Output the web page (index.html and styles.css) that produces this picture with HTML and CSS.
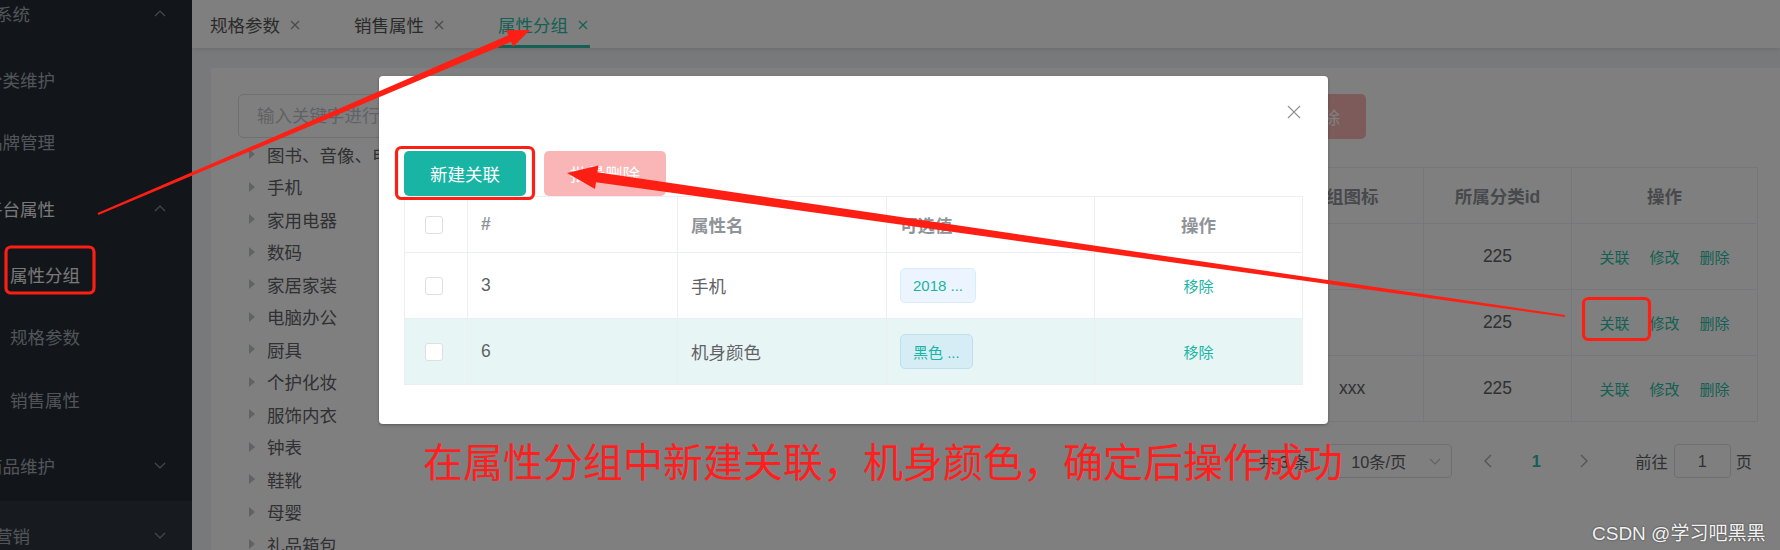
FILE: index.html
```html
<!DOCTYPE html>
<html lang="zh-CN">
<head>
    <meta charset="UTF-8">
    <title>属性分组</title>
    <link rel="stylesheet" href="styles.css">
</head>
<body>
    <div class="app">
        <aside class="sidebar">
            <ul class="menu">
                <li class="menu-title lv1"><span class="label">商品系统</span><svg class="chevron" viewBox="0 0 12 7"><path d="M1 6 L6 1 L11 6"/></svg></li>
                <li class="menu-item lv2"><span class="label">分类维护</span></li>
                <li class="menu-item lv2"><span class="label">品牌管理</span></li>
                <li class="menu-title lv2 open"><span class="label">平台属性</span><svg class="chevron" viewBox="0 0 12 7"><path d="M1 6 L6 1 L11 6"/></svg></li>
                <li class="menu-item lv3 active"><span class="label">属性分组</span></li>
                <li class="menu-item lv3"><span class="label">规格参数</span></li>
                <li class="menu-item lv3"><span class="label">销售属性</span></li>
                <li class="menu-title lv2"><span class="label">商品维护</span><svg class="chevron" viewBox="0 0 12 7"><path d="M1 1 L6 6 L11 1"/></svg></li>
                <li class="menu-title lv1 hover"><span class="label">优惠营销</span><svg class="chevron" viewBox="0 0 12 7"><path d="M1 1 L6 6 L11 1"/></svg></li>
            </ul>
        </aside>

        <div class="main">
            <div class="tabs">
                <div class="tab"><span class="tab-inner">规格参数<svg class="tab-close" viewBox="0 0 14 14"><path d="M3 3 L11 11 M11 3 L3 11"/></svg></span></div>
                <div class="tab"><span class="tab-inner">销售属性<svg class="tab-close" viewBox="0 0 14 14"><path d="M3 3 L11 11 M11 3 L3 11"/></svg></span></div>
                <div class="tab active"><span class="tab-inner">属性分组<svg class="tab-close" viewBox="0 0 14 14"><path d="M3 3 L11 11 M11 3 L3 11"/></svg></span></div>
            </div>

            <div class="content">
                <div class="card">
                    <div class="tree-panel">
                        <input class="search" placeholder="输入关键字进行过滤">
                        <ul class="tree">
                            <li>图书、音像、电子书刊</li>
                            <li>手机</li>
                            <li>家用电器</li>
                            <li>数码</li>
                            <li>家居家装</li>
                            <li>电脑办公</li>
                            <li>厨具</li>
                            <li>个护化妆</li>
                            <li>服饰内衣</li>
                            <li>钟表</li>
                            <li>鞋靴</li>
                            <li>母婴</li>
                            <li>礼品箱包</li>
                            <li>食品饮料、保健食品</li>
                        </ul>
                    </div>

                    <div class="group-panel">
                        <div class="toolbar">
                            <input class="search keyword" placeholder="参数名">
                            <button class="btn btn-primary">查询</button>
                            <button class="btn btn-primary">新增</button>
                            <button class="btn btn-danger">批量删除</button>
                        </div>

                        <table class="grid">
                            <colgroup>
                                <col style="width:55px"><col style="width:120px"><col style="width:200px"><col style="width:120px">
                                <col style="width:258px"><col style="width:110px"><col style="width:148px"><col style="width:186px">
                            </colgroup>
                            <tr>
                                <th><span class="checkbox"></span></th>
                                <th>分组id</th>
                                <th>组名</th>
                                <th>排序</th>
                                <th>描述</th>
                                <th class="left">组图标</th>
                                <th>所属分类id</th>
                                <th>操作</th>
                            </tr>
                            <tr>
                                <td><span class="checkbox"></span></td>
                                <td>1</td><td>主体</td><td>0</td><td>主体</td>
                                <td class="left icon-cell"></td>
                                <td>225</td>
                                <td class="ops"><a>关联</a><a>修改</a><a>删除</a></td>
                            </tr>
                            <tr>
                                <td><span class="checkbox"></span></td>
                                <td>2</td><td>基本信息</td><td>0</td><td>基本信息</td>
                                <td class="left icon-cell"></td>
                                <td>225</td>
                                <td class="ops"><a>关联</a><a>修改</a><a>删除</a></td>
                            </tr>
                            <tr>
                                <td><span class="checkbox"></span></td>
                                <td>7</td><td>屏幕</td><td>0</td><td>屏幕</td>
                                <td class="left icon-cell">xxx</td>
                                <td>225</td>
                                <td class="ops"><a>关联</a><a>修改</a><a>删除</a></td>
                            </tr>
                        </table>

                        <div class="pager">
                            <span class="total">共 3 条</span>
                            <div class="select">10条/页<svg class="select-arrow" viewBox="0 0 12 7"><path d="M1 1 L6 6 L11 1"/></svg></div>
                            <span class="pg-btn"><svg viewBox="0 0 8 14"><path d="M7 1 L1 7 L7 13"/></svg></span>
                            <span class="pg-btn pg-num">1</span>
                            <span class="pg-btn"><svg viewBox="0 0 8 14"><path d="M1 1 L7 7 L1 13"/></svg></span>
                            <span class="goto">前往</span>
                            <span class="goto-input">1</span>
                            <span>页</span>
                        </div>
                    </div>
                </div>
            </div>
        </div>
    </div>

    <div class="mask"></div>

    <div class="dialog">
        <div class="dialog-header">
            <svg class="dialog-close" viewBox="0 0 14 14"><path d="M1 1 L13 13 M13 1 L1 13"/></svg>
        </div>
        <div class="dialog-body">
            <div class="dialog-actions">
                <button class="btn btn-primary">新建关联</button>
                <button class="btn btn-danger">批量删除</button>
            </div>
            <table class="dialog-table">
                <colgroup>
                    <col style="width:63px"><col style="width:210px"><col style="width:209px"><col style="width:208px"><col style="width:208px">
                </colgroup>
                <tr>
                    <th class="check-cell"><span class="checkbox"></span></th>
                    <th>#</th>
                    <th>属性名</th>
                    <th>可选值</th>
                    <th class="center">操作</th>
                </tr>
                <tr>
                    <td class="check-cell"><span class="checkbox"></span></td>
                    <td>3</td>
                    <td>手机</td>
                    <td><span class="tag">2018 ...</span></td>
                    <td class="center"><a class="link">移除</a></td>
                </tr>
                <tr class="current">
                    <td class="check-cell"><span class="checkbox"></span></td>
                    <td>6</td>
                    <td>机身颜色</td>
                    <td><span class="tag">黑色 ...</span></td>
                    <td class="center"><a class="link">移除</a></td>
                </tr>
            </table>
        </div>
    </div>

    <!-- 标注 -->
    <svg class="marks" viewBox="0 0 1780 550">
        <rect x="6" y="247" width="88" height="46" rx="5"/>
        <rect x="396.5" y="147.5" width="137" height="51" rx="5"/>
        <rect x="1583.5" y="298.5" width="66" height="41" rx="5"/>
        <polygon points="98.4,214.9 511.1,41.8 513.2,46.8 530,30 506.2,30.3 508.4,35.3 97.6,213.1"/>
        <polygon points="1565.1,315 597.4,172.3 598.4,165.4 567,173 595,189.1 596,182.2 1564.9,317"/>
    </svg>

    <div class="note">在属性分组中新建关联，机身颜色，确定后操作成功</div>
    <div class="watermark">CSDN @学习吧黑黑</div>
</body>
</html>
```

FILE: styles.css
```css
* {
    margin: 0;
    padding: 0;
    box-sizing: border-box;
}

body {
    width: 1780px;
    height: 550px;
    overflow: hidden;
    position: relative;
    font-family: "Liberation Sans", "Noto Sans CJK SC", sans-serif;
    font-size: 17.5px;
    color: #606266;
}

ul {
    list-style: none;
}

.app {
    display: flex;
    height: 550px;
    overflow: hidden;
}

/* 侧边菜单 */
.sidebar {
    width: 192px;
    flex-shrink: 0;
    background: #242a32;
    overflow: hidden;
}

.menu {
    margin-top: -22px;
}

.menu li {
    display: flex;
    align-items: center;
    justify-content: space-between;
    padding-right: 26px;
    color: #a3abb3;
    white-space: nowrap;
}

.menu-title {
    height: 70px;
}

.menu-item {
    height: 62.5px;
}

.menu .open,
.menu .active {
    color: #f2f2f2;
}

.menu .hover {
    background: #2e353e;
}

.lv1 .label { margin-left: -40px; }
.lv2 .label { margin-left: -15px; }
.lv3 .label { margin-left: 10px; }

.chevron {
    width: 12px;
    height: 7px;
    fill: none;
    stroke: #909399;
    stroke-width: 1.2;
}

/* 主区域 */
.main {
    flex: 1;
    background: #f0f2f5;
    overflow: hidden;
}

.tabs {
    height: 48px;
    background: #fff;
    display: flex;
    box-shadow: 0 1px 4px rgba(0, 21, 41, 0.12);
    position: relative;
}

.tab {
    padding: 0 26px;
    display: flex;
}

.tab:first-child {
    padding-left: 18px;
}

.tab-inner {
    display: flex;
    align-items: center;
    gap: 8px;
    height: 48px;
    padding-top: 4px;
    border-bottom: 3px solid transparent;
    color: #555;
}

.tab-close {
    width: 14px;
    height: 14px;
    fill: none;
    stroke: #909399;
    stroke-width: 1.2;
}

.tab.active .tab-inner {
    color: #2bbfa8;
    border-bottom-color: #2bbfa8;
}

.tab.active .tab-close {
    stroke: #2bbfa8;
}

.content {
    padding: 20px 0 0 19px;
}

.card {
    height: 482px;
    background: #fff;
    display: flex;
    gap: 22px;
    padding: 26px 23px 0 27px;
    overflow: hidden;
}

.tree-panel {
    width: 300px;
    flex-shrink: 0;
}

.search {
    width: 100%;
    height: 44px;
    border: 1px solid #dcdfe6;
    border-radius: 5px;
    padding: 0 18px;
    font: inherit;
    color: #606266;
    outline: none;
}

.search::placeholder {
    color: #c0c4cc;
}

.tree li {
    height: 32.5px;
    display: flex;
    align-items: center;
    white-space: nowrap;
}

.tree li::before {
    content: '';
    border-left: 6px solid #c0c4cc;
    border-top: 5px solid transparent;
    border-bottom: 5px solid transparent;
    margin: 0 12px 0 11px;
}

.group-panel {
    flex: 1;
    min-width: 0;
}

.toolbar {
    display: flex;
    gap: 12px;
}

.toolbar .keyword {
    width: 404px;
}

.btn {
    width: 122px;
    height: 45px;
    border: none;
    border-radius: 5px;
    font: inherit;
    color: #fff;
}

.btn-primary {
    background: #18b4a4;
}

.btn-danger {
    background: #fab6b6;
}

.grid {
    width: 100%;
    margin-top: 28px;
    border-collapse: collapse;
    table-layout: fixed;
}

.grid th,
.grid td {
    border: 1px solid #ebeef5;
    padding: 0 12px;
    text-align: center;
    white-space: nowrap;
}

.grid th {
    height: 56px;
    color: #909399;
    font-weight: bold;
}

.grid td {
    height: 66px;
}

.grid .left {
    text-align: left;
}

.grid .icon-cell {
    padding-left: 25px;
}

.ops a {
    color: #2bbfa8;
    font-size: 15px;
    margin: 0 10px;
}

.checkbox {
    display: inline-block;
    width: 18px;
    height: 18px;
    border: 1px solid #dcdfe6;
    border-radius: 3px;
    background: #fff;
    vertical-align: middle;
}

/* 分页 */
.pager {
    display: flex;
    justify-content: flex-end;
    align-items: center;
    height: 34px;
    margin-top: 22px;
    padding-right: 5px;
    font-size: 16.25px;
}

.total {
    margin-right: 19px;
}

.select {
    width: 124px;
    height: 34px;
    border: 1px solid #dcdfe6;
    border-radius: 4px;
    display: flex;
    align-items: center;
    justify-content: space-between;
    padding: 0 10px 0 22px;
    margin-right: 12px;
}

.select-arrow {
    width: 12px;
    height: 7px;
    fill: none;
    stroke: #c0c4cc;
    stroke-width: 1.2;
}

.pg-btn {
    width: 48px;
    height: 34px;
    display: flex;
    align-items: center;
    justify-content: center;
}

.pg-btn svg {
    width: 8px;
    height: 14px;
    fill: none;
    stroke: #a8abb2;
    stroke-width: 1.4;
}

.pg-num {
    color: #2bbfa8;
    font-weight: bold;
}

.goto {
    margin-left: 27px;
}

.goto-input {
    width: 57px;
    height: 34px;
    border: 1px solid #dcdfe6;
    border-radius: 4px;
    margin: 0 5px 0 6px;
    display: flex;
    align-items: center;
    justify-content: center;
}

/* 遮罩与对话框 */
.mask {
    position: absolute;
    inset: 0;
    background: rgba(0, 0, 0, 0.5);
}

.dialog {
    position: absolute;
    left: 379px;
    top: 76px;
    width: 949px;
    height: 348px;
    background: #fff;
    border-radius: 4px;
    box-shadow: 0 1px 3px rgba(0, 0, 0, 0.3);
}

.dialog-header {
    display: flex;
    justify-content: flex-end;
    padding: 29px 27px 17px;
}

.dialog-close {
    width: 14px;
    height: 14px;
    fill: none;
    stroke: #909399;
    stroke-width: 1.2;
}

.dialog-body {
    padding: 15px 26px 0 25px;
}

.dialog-actions {
    display: flex;
    gap: 18px;
}

.dialog-table {
    width: 898px;
    border-collapse: collapse;
    table-layout: fixed;
}

.dialog-table th,
.dialog-table td {
    border: 1px solid #ebeef5;
    padding: 0 13px;
    text-align: left;
    white-space: nowrap;
}

.dialog-table th {
    height: 56px;
    color: #909399;
    font-weight: bold;
}

.dialog-table td {
    height: 66px;
}

.dialog-table .check-cell {
    padding-left: 20px;
}

.dialog-table .center {
    text-align: center;
}

.dialog-table .current td {
    background: #e8f5f5;
}

.tag {
    display: inline-flex;
    align-items: center;
    height: 35px;
    padding: 0 12px;
    border: 1px solid #d9ecff;
    border-radius: 5px;
    background: #ecf5ff;
    color: #18b4a4;
    font-size: 15px;
}

.current .tag {
    background: #d6edf5;
    border-color: #bfdff0;
}

.link {
    color: #18b4a4;
    font-size: 15px;
}

/* 红色标注 */
.marks {
    position: absolute;
    left: 0;
    top: 0;
    width: 1780px;
    height: 550px;
    pointer-events: none;
}

.marks rect {
    fill: none;
    stroke: #fe1f14;
    stroke-width: 3.2;
}

.marks polygon {
    fill: #fe1f14;
}

.note {
    position: absolute;
    left: 423px;
    top: 438px;
    font-family: "Noto Sans CJK SC", sans-serif;
    font-size: 40px;
    line-height: 44px;
    color: #ff1f1f;
    white-space: nowrap;
}

.watermark {
    position: absolute;
    left: 1592px;
    top: 518px;
    font-size: 19px;
    color: #f2f2f2;
    text-shadow: 0 0 2px rgba(0, 0, 0, 0.6);
    white-space: nowrap;
}
```
